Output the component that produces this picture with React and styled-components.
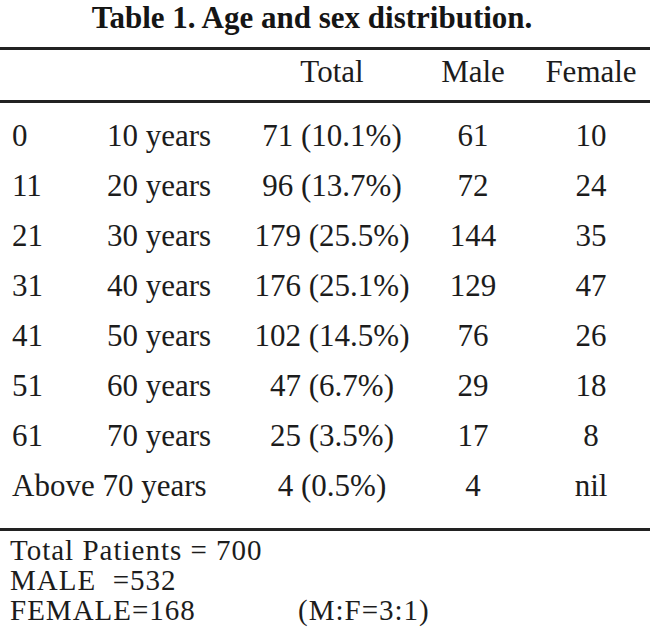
import React from 'react';
import styled, { createGlobalStyle } from 'styled-components';

const GlobalStyle = createGlobalStyle`
  html, body {
    margin: 0;
    padding: 0;
    background: #ffffff;
  }
  body {
    font-family: 'Liberation Serif', 'Times New Roman', serif;
    color: #1c1c1c;
  }
`;

const Page = styled.div`
  width: 650px;
  height: 632px;
  overflow: hidden;
  background: #ffffff;
`;

const Title = styled.h1`
  margin: 0;
  padding-right: 26px;
  font-size: 31px;
  line-height: 36px;
  font-weight: 700;
  text-align: center;
  color: #151515;
`;

const Rule = styled.div`
  height: 3px;
  background: #222;
  margin-top: ${(p) => p.$top || 0}px;
`;

const Row = styled.div`
  display: grid;
  grid-template-columns: 95px 143px 164px 118px 1fr;
  align-items: center;
  padding-left: 12px;
  font-size: 31px;
  line-height: ${(p) => (p.$head ? 44 : 50)}px;
  padding-bottom: ${(p) => (p.$head ? 6 : 0)}px;
`;

const Cell = styled.div`
  white-space: nowrap;
  text-align: ${(p) => (p.$center ? 'center' : 'left')};
  grid-column: ${(p) => (p.$span ? `span ${p.$span}` : 'auto')};
`;

const Body = styled.div`
  padding-top: 8px;
  padding-bottom: 17px;
`;

const Footer = styled.div`
  padding: 4px 0 0 10px;
  font-size: 29px;
  line-height: 30px;
  letter-spacing: 1px;
`;

const Line = styled.div`
  display: flex;
  white-space: pre;
`;

const Lead = styled.span`
  width: ${(p) => p.$w || 'auto'};
`;

const rows = [
  ['0', '10 years', '71 (10.1%)', '61', '10'],
  ['11', '20 years', '96 (13.7%)', '72', '24'],
  ['21', '30 years', '179 (25.5%)', '144', '35'],
  ['31', '40 years', '176 (25.1%)', '129', '47'],
  ['41', '50 years', '102 (14.5%)', '76', '26'],
  ['51', '60 years', '47 (6.7%)', '29', '18'],
  ['61', '70 years', '25 (3.5%)', '17', '8'],
];

export default function App() {
  return (
    <>
      <GlobalStyle />
      <Page>
        <Title>Table 1. Age and sex distribution.</Title>
        <Rule $top={11} />
        <Row $head>
          <Cell />
          <Cell />
          <Cell $center>Total</Cell>
          <Cell $center>Male</Cell>
          <Cell $center>Female</Cell>
        </Row>
        <Rule />
        <Body>
          {rows.map((r) => (
            <Row key={r[0]}>
              <Cell>{r[0]}</Cell>
              <Cell>{r[1]}</Cell>
              <Cell $center>{r[2]}</Cell>
              <Cell $center>{r[3]}</Cell>
              <Cell $center>{r[4]}</Cell>
            </Row>
          ))}
          <Row>
            <Cell $span={2}>Above 70 years</Cell>
            <Cell $center>4 (0.5%)</Cell>
            <Cell $center>4</Cell>
            <Cell $center>nil</Cell>
          </Row>
        </Body>
        <Rule />
        <Footer>
          <Line>Total Patients = 700</Line>
          <Line>MALE  =532</Line>
          <Line>
            <Lead $w="288px">FEMALE=168</Lead>
            <span>(M:F=3:1)</span>
          </Line>
        </Footer>
      </Page>
    </>
  );
}
